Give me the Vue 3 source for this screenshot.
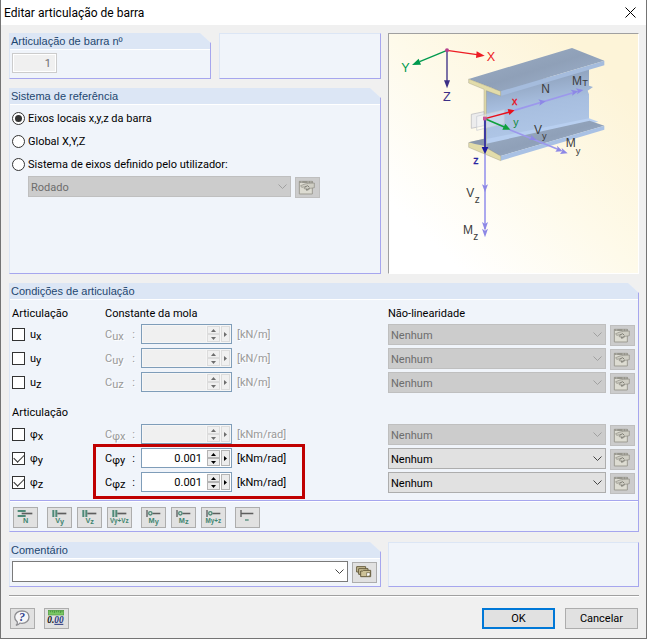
<template>
  <form class="dialog" @submit.prevent>
    <header class="titlebar">
      <h1>Editar articulação de barra</h1>
      <button type="button" class="close" aria-label="Fechar">
        <svg viewBox="0 0 11 11"><path d="M0.5 0.5 10.5 10.5M10.5 0.5 0.5 10.5" /></svg>
      </button>
    </header>

    <main class="content">
      <div class="top">
        <div class="left">
          <div class="pair">
            <section class="panel">
              <h2><label for="hinge-no">Articulação de barra nº</label></h2>
              <div class="number-body">
                <input id="hinge-no" class="number" type="text" value="1" disabled />
              </div>
            </section>
            <section class="panel blank"></section>
          </div>

          <section class="panel">
            <h2>Sistema de referência</h2>
            <div class="system-body">
              <label v-for="s in systems" :key="s.id" class="radio-row">
                <input v-model="system" type="radio" name="system" :value="s.id" />
                <span>{{ s.label }}</span>
              </label>
              <div class="system-select">
                <div class="combo">
                  <select aria-label="Sistema de eixos" :disabled="system !== 'user'">
                    <option>Rodado</option>
                  </select>
                  <svg class="chevron" viewBox="0 0 9 5"><path d="M0.5 0.5 4.5 4.5 8.5 0.5" /></svg>
                </div>
                <button type="button" class="tool" aria-label="Editar sistema" disabled>
                  <svg viewBox="0 0 69 57"><use href="#icon-edit" /></svg>
                </button>
              </div>
            </div>
          </section>
        </div>

        <div class="picture">
          <svg viewBox="12 27 747 717" role="img" aria-label="Eixos e esforços da barra">
            <defs>
              <linearGradient id="flange" x1="0" y1="0" x2="1" y2="1">
                <stop offset="0" stop-color="#9dafc6" />
                <stop offset="0.5" stop-color="#8fa0b8" />
                <stop offset="1" stop-color="#a3b7d3" />
              </linearGradient>
              <linearGradient id="web" x1="0.3" y1="0" x2="0.5" y2="1">
                <stop offset="0" stop-color="#8799b2" />
                <stop offset="0.45" stop-color="#a7bedf" />
                <stop offset="1" stop-color="#b3caea" />
              </linearGradient>
            </defs>

            <!-- profile -->
            <path fill="url(#web)" d="M302 196 612 132V182L624 186 608 197 612 208V284L302 372Z" />
            <path fill="#b8cff0" d="M304 342 612 280 640 290 350 362 304 372Z" />
            <path fill="url(#flange)" d="M304 356 614 287 658 302 347 393 304 378Z" />
            <path fill="#a9c1e4" d="M347 393 658 302V314L347 407Z" />
            <path fill="url(#flange)" d="M251 162 561 69 658 107 347 199Z" />
            <path fill="#a5bcdd" d="M347 199 658 107V121L347 213Z" />
            <path fill="#e2dcaa" stroke="#8c8a74" stroke-width="1" d="M251 162 347 199V213L304 197V368L347 393V407L251 367V353L297 343V193L251 174Z" />
            <path fill="#8997ad" d="M251 352 297 341V362L270 357Z" />

            <!-- support plate -->
            <path fill="#e7e9ee" fill-opacity="0.8" stroke="#b4b4ba" stroke-width="2" d="M259 268 297 260V302L259 310Z" />
            <path fill="#fff" fill-opacity="0.35" stroke="#c5c8d0" stroke-width="2" d="M275 274 358 254V296L275 316Z" />

            <!-- global axes -->
            <g stroke-width="4">
              <path stroke="#ed1c24" d="M186 76 276 89" />
              <path stroke="#009a4e" d="M186 76 104 110" />
              <path stroke="#3b2f86" d="M186 76V168" />
            </g>
            <path fill="#ed1c24" d="M299 92 273 99 275 79Z" />
            <path fill="#009a4e" d="M81 120 101 101 108 119Z" />
            <path fill="#3b2f86" d="M186 190 177 166H195Z" />
            <circle cx="186" cy="76" r="6" fill="#b5418c" />
            <g font-size="38">
              <text x="305" y="108" fill="#ed1c24">X</text>
              <text x="49" y="141" fill="#009a4e">Y</text>
              <text x="174" y="228" fill="#3b2f86">Z</text>
            </g>

            <!-- forces and moments -->
            <g stroke="#9c98ec" stroke-width="5">
              <path d="M388 256 572 201" />
              <path d="M374 314 526 376" />
              <path d="M300 386V612" />
            </g>
            <g fill="#8d88e6">
              <path d="M482 229 463 242 466 231 460 223Z" />
              <path d="M580 199 561 212 564 202 557 194Z" />
              <path d="M595 195 576 208 579 198 572 190Z" />
              <path d="M455 345 431 345 439 338 437 329Z" />
              <path d="M533 379 511 380 518 371 516 362Z" />
              <path d="M548 385 525 387 532 378 530 369Z" />
              <path d="M300 502 291 478 300 483 309 478Z" />
              <path d="M300 617 291 591 300 597 309 591Z" />
              <path d="M300 637 291 611 300 617 309 611Z" />
            </g>

            <!-- local axes -->
            <path stroke="#e8101c" stroke-width="4" d="M300 281 374 261" />
            <path fill="#e8101c" d="M389 256 373 270 368 252Z" />
            <path stroke="#0fa03c" stroke-width="5" d="M300 281 358 306" />
            <path fill="#0fa03c" d="M376 314 352 314 361 296Z" />
            <path stroke="#1e1ca0" stroke-width="5" d="M300 281V370" />
            <path fill="#1e1ca0" d="M300 388 290 366H310Z" />
            <rect x="294" y="275" width="11" height="11" fill="#c8559a" />
            <g font-size="32">
              <text x="381" y="240" fill="#e8101c" stroke="#e8101c">x</text>
              <text x="385" y="303" fill="#0f8a3c">y</text>
              <text x="265" y="416" fill="#1e1ca0" stroke="#1e1ca0">z</text>
            </g>
            <g class="force" font-size="36">
              <text x="469" y="205">N</text>
              <text x="561" y="180">M<tspan dx="1" dy="4" font-size="28">T</tspan></text>
              <text x="447" y="326">V<tspan dy="17" font-size="28">y</tspan></text>
              <text x="542" y="367">M<tspan dy="20" font-size="28">y</tspan></text>
              <text x="244" y="516">V<tspan dx="1" dy="17" font-size="30">z</tspan></text>
              <text x="234" y="627">M<tspan dx="1" dy="19" font-size="30">z</tspan></text>
            </g>
          </svg>
        </div>
      </div>

      <section class="panel conditions">
        <h2>Condições de articulação</h2>
        <div v-for="(group, g) in groups" :key="g" class="group">
          <div class="grid heading">
            <span>Articulação</span>
            <template v-if="g === 0">
              <span class="wide">Constante da mola</span>
              <span>Não-linearidade</span>
            </template>
          </div>
          <div v-for="row in group" :key="row.id" class="grid row" :class="{ off: !row.active }">
            <label class="check">
              <input v-model="row.active" type="checkbox" />
              <span>{{ row.base }}<sub>{{ row.axis }}</sub></span>
            </label>
            <label class="constant" :for="'c-' + row.id">
              <span>C<sub>{{ row.base }}{{ row.axis }}</sub></span><span>:</span>
            </label>
            <div class="spin">
              <input :id="'c-' + row.id" v-model="row.value" type="text" :disabled="!row.active" />
              <div class="steps">
                <button type="button" aria-label="Aumentar" :disabled="!row.active">
                  <svg viewBox="0 0 5 3"><path d="M0 3 2.5 0 5 3Z" /></svg>
                </button>
                <button type="button" aria-label="Diminuir" :disabled="!row.active">
                  <svg viewBox="0 0 5 3"><path d="M0 0 2.5 3 5 0Z" /></svg>
                </button>
              </div>
              <button type="button" class="more" aria-label="Mais" :disabled="!row.active">
                <svg viewBox="0 0 3 5"><path d="M0 0 3 2.5 0 5Z" /></svg>
              </button>
            </div>
            <span class="unit">{{ row.unit }}</span>
            <div class="combo">
              <select :aria-label="'Não-linearidade ' + row.base + row.axis" :disabled="!row.active">
                <option>Nenhum</option>
              </select>
              <svg class="chevron" viewBox="0 0 9 5"><path d="M0.5 0.5 4.5 4.5 8.5 0.5" /></svg>
            </div>
            <button type="button" class="tool" aria-label="Editar não-linearidade" disabled>
              <svg viewBox="0 0 69 57"><use href="#icon-edit" /></svg>
            </button>
          </div>
          <div v-if="g === 1" class="highlight"></div>
        </div>

        <div class="toolbar">
          <div v-for="(set, i) in presets" :key="i" class="set">
            <button v-for="p in set" :key="p.text" type="button" class="tool" :aria-label="p.text">
              <svg viewBox="3 3 69 57">
                <g v-if="p.kind === 'axial'">
                  <path fill="#4f8a78" d="M14 9H38V15H14ZM14 24H38V30H14Z" />
                  <path fill="#5e5e5e" d="M26 17H58V22H26Z" />
                </g>
                <g v-else-if="p.kind === 'shear'">
                  <path fill="#4f8a78" d="M16 9H22V30H16ZM25 9H31V30H25Z" />
                  <path fill="#5e5e5e" d="M31 17H58V22H31Z" />
                </g>
                <g v-else-if="p.kind === 'moment'">
                  <path fill="#5e5e5e" d="M16 9H20V30H16ZM34 17H58V22H34Z" />
                  <circle cx="28" cy="19" r="5" fill="none" stroke="#4f8a78" stroke-width="4" />
                </g>
                <g v-else>
                  <path fill="#5e5e5e" d="M16 9H20V30H16ZM20 17H55V22H20Z" />
                  <path fill="#4f8a78" d="M30 37H41V41H30Z" />
                </g>
                <text v-if="p.main" x="38" y="49" text-anchor="middle">{{ p.main }}<tspan dy="3">{{ p.sub }}</tspan></text>
                <text v-else-if="p.small" x="37" y="49" text-anchor="middle" class="small">{{ p.small }}</text>
              </svg>
            </button>
          </div>
        </div>
      </section>

      <div class="bottom">
        <section class="panel">
          <h2><label for="comment">Comentário</label></h2>
          <div class="comment-body">
            <div class="combo comment">
              <input id="comment" v-model="comment" type="text" />
              <svg class="chevron" viewBox="0 0 9 5"><path d="M0.5 0.5 4.5 4.5 8.5 0.5" /></svg>
            </div>
            <button type="button" class="tool" aria-label="Comentários guardados">
              <svg viewBox="3 3 69 57">
                <g fill="#cdc298" stroke="#655c3e" stroke-width="3">
                  <path d="M14 14H41V30H14Z" />
                  <path d="M20 20H48V37H20Z" />
                  <path d="M26 27H32L35 25H56V44H26Z" />
                </g>
                <path fill="#fff" stroke="#655c3e" stroke-width="2" d="M44 32H54V38L49 43H44Z" />
              </svg>
            </button>
          </div>
        </section>
        <section class="panel blank"></section>
      </div>

      <hr />

      <footer class="footer">
        <div class="helpers">
          <button type="button" class="tool" aria-label="Ajuda">
            <svg viewBox="3 3 69 57">
              <path fill="#f6f6f8" stroke="#8e8e92" stroke-width="4" d="M36 9C48 9 57 16 57 27S48 46 36 46C34 46 32 46 30 45 28 48 25 51 18 52 22 49 23 46 22 42 18 39 14 34 14 27 14 16 24 9 36 9Z" />
              <text x="36" y="39" text-anchor="middle" class="help">?</text>
            </svg>
          </button>
          <button type="button" class="tool" aria-label="Unidades e casas decimais">
            <svg viewBox="3 3 69 57">
              <rect x="13" y="7" width="46" height="14" fill="#7cc865" stroke="#4b9a3c" stroke-width="2" />
              <path stroke="#2f7a2c" stroke-width="2" d="M19 8V13M25 8V13M31 8V15M37 8V13M43 8V13M49 8V15M54 8V13" />
              <path stroke="#26347c" stroke-width="3" d="M31 49H58" />
              <text x="10" y="45" class="digits">0.<tspan fill="#26347c">00</tspan></text>
            </svg>
          </button>
        </div>
        <div class="actions">
          <button type="submit" class="action primary">OK</button>
          <button type="button" class="action">Cancelar</button>
        </div>
      </footer>
    </main>

    <svg class="symbols" aria-hidden="true">
      <symbol id="icon-edit" viewBox="3 3 69 57">
        <path fill="#dddcd2" stroke="#9d9c93" stroke-width="3" d="M13 13H52V51H13Z" />
        <path fill="#96958c" d="M13 12H53V18H13Z" />
        <path fill="#e8e8e0" d="M17 14H22V16H17ZM37 14H42V16H37ZM45 14H50V16H45Z" />
        <path fill="#cfcec4" stroke="#8b8a81" stroke-width="2" d="M17 26 30 21 41 19 58 18V32L46 34 38 40 33 39 35 35 29 36 27 33 32 29 20 31Z" />
        <path fill="none" stroke="#7f7e75" stroke-width="3" d="M30 30 38 26 43 31M33 39 44 34" />
      </symbol>
    </svg>
  </form>
</template>

<script setup>
import { ref, reactive } from "vue";

const system = ref("local");
const comment = ref("");

const systems = [
  { id: "local", label: "Eixos locais x,y,z da barra" },
  { id: "global", label: "Global X,Y,Z" },
  { id: "user", label: "Sistema de eixos definido pelo utilizador:" },
];

const makeRow = (base, axis, unit, value = "") => ({
  id: base + axis,
  base,
  axis,
  unit,
  value,
  active: value !== "",
});

const groups = reactive([
  [makeRow("u", "x", "[kN/m]"), makeRow("u", "y", "[kN/m]"), makeRow("u", "z", "[kN/m]")],
  [
    makeRow("φ", "x", "[kNm/rad]"),
    makeRow("φ", "y", "[kNm/rad]", "0.001"),
    makeRow("φ", "z", "[kNm/rad]", "0.001"),
  ],
]);

const presets = [
  [{ kind: "axial", text: "N", main: "N" }],
  [
    { kind: "shear", text: "Vy", main: "V", sub: "y" },
    { kind: "shear", text: "Vz", main: "V", sub: "z" },
    { kind: "shear", text: "Vy+Vz", small: "Vy+Vz" },
  ],
  [
    { kind: "moment", text: "My", main: "M", sub: "y" },
    { kind: "moment", text: "Mz", main: "M", sub: "z" },
    { kind: "moment", text: "My+z", small: "My+z" },
  ],
  [{ kind: "none", text: "Nenhuma" }],
];
</script>

<style>
body {
  background: #f0f0f0;
}
</style>

<style scoped>
* {
  box-sizing: border-box;
}

.dialog {
  border: 1px solid #747474;
  border-top: none;
  background: #f0f0f0;
  color: #000;
  font: 11px/14px Roboto, "Open Sans", sans-serif;
}

.dialog svg {
  display: block;
}

.symbols {
  position: absolute;
  width: 0;
  height: 0;
}

button,
input,
select {
  margin: 0;
  font: inherit;
  color: inherit;
}

.titlebar {
  display: flex;
  align-items: center;
  justify-content: space-between;
  height: 25px;
  padding: 0 10px 0 3px;
  background: #fff;
}

.titlebar h1 {
  margin: 0;
  font-size: 12px;
  font-weight: 400;
}

.close {
  padding: 0;
  border: none;
  background: none;
}

.close svg {
  width: 11px;
  height: 11px;
  stroke: #000;
}

.content {
  padding: 8px 7px 9px 8px;
}

.top,
.bottom {
  display: grid;
  grid-template-columns: minmax(0, 1fr) 251px;
  column-gap: 7px;
}

.left {
  display: grid;
  grid-template-rows: auto 1fr;
  row-gap: 9px;
}

.pair {
  display: grid;
  grid-template-columns: 202fr 162fr;
  column-gap: 8px;
}

.panel {
  border: 1px solid #a6a6ee;
  border-width: 0 1px 1px 0;
  border-left: 1px solid #dce6f5;
  background: #f0f4fa;
  clip-path: polygon(0 0, calc(100% - 11px) 0, 100% 10px, 100% 100%, 0 100%);
}

.panel.blank {
  border-top: 1px solid #dce6f5;
  clip-path: none;
}

.panel h2 {
  height: 17px;
  margin: 0;
  padding-left: 1px;
  border-bottom: 1px solid #fff;
  background: #dce6f5;
  color: #1e4670;
  font: 11px/16px "Liberation Sans", Arial, sans-serif;
}

.number-body {
  padding: 3px 2px 5px;
}

.number {
  display: block;
  width: 45px;
  height: 20px;
  padding: 1px 5px 0;
  border: 1px solid #ccc;
  background: #f0f0f0;
  box-shadow: inset 0 0 0 1px #fff;
  color: #6d6d6d;
  text-align: right;
}

.system-body {
  padding: 2px 60px 0 2px;
}

.radio-row {
  display: flex;
  align-items: center;
  gap: 3px;
  height: 23px;
}

.radio-row span {
  padding-top: 1px;
}

.radio-row input,
.check input {
  display: grid;
  place-items: center;
  flex: none;
  width: 13px;
  height: 13px;
  border: 1px solid #333;
  background: #fff;
  appearance: none;
}

.radio-row input {
  border-radius: 50%;
}

.radio-row input:checked::before {
  content: "";
  width: 7px;
  height: 7px;
  border-radius: 50%;
  background: #333;
}

.check input:checked::before {
  content: "";
  width: 9px;
  height: 5px;
  margin-bottom: 3px;
  border: 1px solid #333;
  border-width: 0 0 1px 1px;
  transform: rotate(-45deg);
}

.system-select {
  display: flex;
  gap: 4px;
  margin-left: 16px;
}

.combo {
  position: relative;
  flex: 1;
  height: 21px;
}

.combo select,
.combo input {
  display: block;
  width: 100%;
  height: 21px;
  padding: 2px 20px 0 2px;
  border: 1px solid #adadad;
  border-radius: 0;
  background: #e1e1e1;
  appearance: none;
}

.combo select:disabled {
  border-color: #bfbfbf;
  background: #ccc;
  color: #6d6d6d;
  opacity: 1;
}

.combo.comment input {
  border-color: #7a7a7a;
  background: #fff;
}

.chevron {
  position: absolute;
  top: 8px;
  right: 4px;
  width: 9px;
  height: 5px;
  fill: none;
  stroke: #444;
  pointer-events: none;
}

select:disabled + .chevron {
  stroke: #a0a0a0;
}

.tool {
  flex: none;
  width: 25px;
  height: 21px;
  margin-top: 1px;
  padding: 0;
  border: 1px solid #adadad;
  background: #e1e1e1;
}

.tool:disabled {
  border-color: #bfbfbf;
  background: #ccc;
}

.tool svg {
  width: 23px;
  height: 19px;
}

.tool text {
  fill: #3f8570;
  font: 700 22px "Liberation Sans", Arial, sans-serif;
}

.tool .small {
  font-size: 19px;
}

.tool .help {
  fill: #2c3c8c;
  font: italic 700 36px "Liberation Serif", serif;
}

.tool .digits {
  fill: #111;
  font: italic 700 28px "Liberation Serif", serif;
}

.picture {
  border: 1px solid #a0a0a0;
  border-right-color: #fff;
  border-bottom-color: #fff;
  background: linear-gradient(to top right, #fff 15%, #fefaea 50%, #fdf4d8 85%);
}

.picture svg {
  width: 100%;
  font-family: "Liberation Sans", Arial, sans-serif;
}

.force {
  fill: #3c3c3c;
  font-family: "Liberation Sans Narrow", "Liberation Sans", sans-serif;
}

.conditions {
  margin-top: 9px;
}

.group {
  position: relative;
  padding: 0 3px 0 2px;
}

.grid {
  display: grid;
  grid-template-columns: 93px 36px 96px 151px minmax(0, 1fr) 25px;
}

.heading {
  padding: 7px 0 3px;
}

.group + .group .heading {
  padding: 12px 0 4px;
}

.wide {
  grid-column: 2 / 5;
}

.row {
  height: 22px;
}

.row + .row {
  margin-top: 2px;
}

.row .combo {
  margin-right: 4px;
}

.check {
  display: flex;
  align-items: center;
  gap: 5px;
  height: 20px;
}

.check span {
  padding-top: 1px;
}

sub {
  position: relative;
  top: 2px;
  font-size: 11px;
  line-height: 1;
  vertical-align: baseline;
}

.constant {
  display: flex;
  justify-content: space-between;
  height: 20px;
  padding-right: 6px;
  line-height: 22px;
}

.unit {
  line-height: 22px;
}

.off .constant,
.off .unit {
  color: #999;
  text-shadow: 1px 1px #fff;
}

.spin {
  display: flex;
  gap: 1px;
  width: 91px;
  height: 20px;
  padding: 1px;
  border: 1px solid #7f9db9;
  background: #fff;
}

.spin input {
  flex: 1;
  min-width: 0;
  padding: 2px 4px 0;
  border: none;
  background: #fff;
  text-align: right;
}

.off .spin input {
  background: #f0f0f0;
}

.off .spin {
  background: #f6f6f6;
}

.steps {
  display: flex;
  flex-direction: column;
  width: 13px;
}

.spin button {
  display: grid;
  flex: 1;
  place-items: center;
  padding: 0;
  border: 1px solid #b4b4b4;
  background: #ececec;
}

.spin .more {
  flex: none;
  width: 9px;
}

.spin button:disabled {
  border-color: #dcdcdc;
  background: #f0f0f0;
}

.steps svg {
  width: 5px;
  height: 3px;
}

.more svg {
  width: 3px;
  height: 5px;
}

.off .spin svg {
  fill: #6d6d6d;
}

/* frame around the two active spring constants */
.highlight {
  position: absolute;
  right: 333px;
  bottom: -5px;
  left: 83px;
  height: 55px;
  border: 3px solid #c00000;
  pointer-events: none;
}

.toolbar {
  display: flex;
  gap: 9px;
  margin-top: 6px;
  padding: 5px 3px 3px;
  border-top: 1px solid #a6a6ee;
  box-shadow: inset 0 1px #fff;
}

.set {
  display: flex;
  gap: 5px;
}

.bottom {
  margin-top: 10px;
}

.comment-body {
  display: flex;
  gap: 4px;
  padding: 2px 3px 3px 2px;
}

hr {
  height: 2px;
  margin: 8px 0 0;
  border: none;
  border-top: 1px solid #a0a0a0;
  background: #fff;
}

.footer {
  display: flex;
  justify-content: space-between;
  padding: 10px 1px 0;
}

.helpers {
  display: flex;
  gap: 9px;
}

.actions {
  display: flex;
  gap: 10px;
}

.action {
  width: 73px;
  height: 21px;
  margin-top: 1px;
  padding: 1px 0 0;
  border: 1px solid #adadad;
  background: #e1e1e1;
  font-size: 11px;
}

.primary {
  border: 2px solid #0078d7;
}
</style>
